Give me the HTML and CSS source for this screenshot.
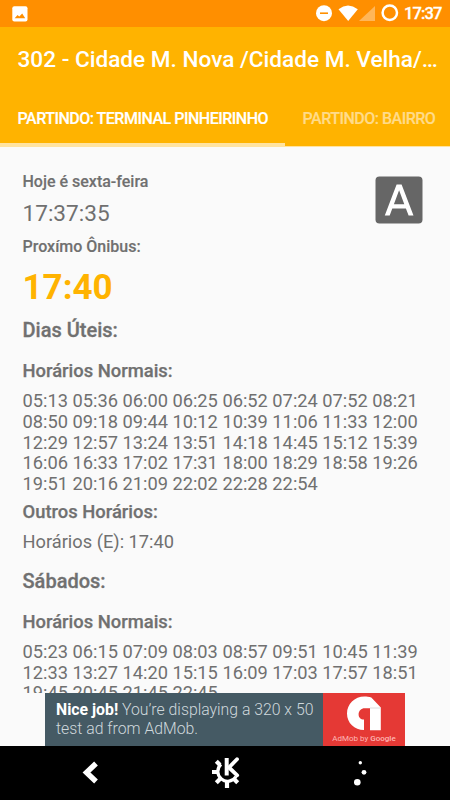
FILE: index.html
```html
<!DOCTYPE html>
<html lang="pt-BR">
<head>
<meta charset="utf-8">
<title>302 - Cidade M. Nova</title>
<link rel="stylesheet" href="styles.css">
</head>
<body>
<div class="phone">
  <header class="status">
    <svg class="picture" width="16" height="16" viewBox="0 0 16 16"><rect x=".3" y=".2" width="15.2" height="15.3" rx="2" fill="#fff"/><path d="M2.7 12.2 5.5 9l1.8 1.6 2.9-3 3 4.6z" fill="#ff8f00"/></svg>
    <svg class="signals" width="84" height="20" viewBox="0 0 84 20"><circle cx="8" cy="10.2" r="8" fill="#fff"/><path d="M4 10.2h8" stroke="#ff8f00" stroke-width="1.6"/><path d="M22.5 6.2Q32 -1 41.8 6.2L32.2 18z" fill="#fff"/><path d="M59 3v15H43z" fill="#fff" opacity=".35"/><circle cx="73.8" cy="9.7" r="7.2" fill="none" stroke="#fff" stroke-width="2.5"/></svg>
    <span class="clock">17:37</span>
  </header>
  <div class="toolbar">
    <h1 class="title">302 - Cidade M. Nova /Cidade M. Velha/…</h1>
    <nav class="tabs">
      <span class="tab active"><span class="tab-text">PARTINDO: TERMINAL PINHEIRINHO</span></span>
      <span class="tab"><span class="tab-text">PARTINDO: BAIRRO</span></span>
    </nav>
  </div>
  <main class="content">
    <div class="summary">
      <div>
        <p class="label">Hoje é sexta-feira</p>
        <p class="now">17:37:35</p>
        <p class="label">Proxímo Ônibus:</p>
        <p class="next">17:40</p>
      </div>
      <svg class="badge" width="48" height="48" viewBox="0 0 48 48"><rect x=".5" y=".5" width="47" height="47" rx="4" fill="#666"/><path fill-rule="evenodd" d="M9.8 39.5 21.6 8.5h5L38.5 39.5h-4.9l-2.7-7H17.3l-2.6 7zM18.9 28.3h10.4L24.1 14.2z" fill="#fff"/></svg>
    </div>
    <h2 class="day">Dias Úteis:</h2>
    <h3 class="kind">Horários Normais:</h3>
    <p class="times">05:13 05:36 06:00 06:25 06:52 07:24 07:52 08:21<br>08:50 09:18 09:44 10:12 10:39 11:06 11:33 12:00<br>12:29 12:57 13:24 13:51 14:18 14:45 15:12 15:39<br>16:06 16:33 17:02 17:31 18:00 18:29 18:58 19:26<br>19:51 20:16 21:09 22:02 22:28 22:54</p>
    <h3 class="kind other">Outros Horários:</h3>
    <p class="times">Horários (E): 17:40</p>
    <h2 class="day saturday">Sábados:</h2>
    <h3 class="kind">Horários Normais:</h3>
    <p class="times">05:23 06:15 07:09 08:03 08:57 09:51 10:45 11:39<br>12:33 13:27 14:20 15:15 16:09 17:03 17:57 18:51<br>19:45 20:45 21:45 22:45</p>
  </main>
  <aside class="ad">
    <div class="ad-copy"><p><b>Nice job!</b> You’re displaying a 320 x 50</p><p>test ad from AdMob.</p></div>
    <div class="ad-brand">
      <svg width="36" height="36" viewBox="0 0 36 36"><path d="M18 34V23.6C14.5 23.6 12.6 21 12.6 18.4 12.6 14.8 15.4 12.3 18.5 12.3H24V34.3H34.8V11.5L25.3 1.5C23 .8 20.5 .6 18.5 .6 8.5 .6 1 8.3 1 17.5 1 27 8.5 34 18 34z" fill="#fff"/><path d="M24 12H34.5" stroke="#d5d5d5" stroke-width=".8"/></svg>
      <span class="ad-caption">AdMob by <b>Google</b></span>
    </div>
  </aside>
  <footer class="navbar">
    <svg width="450" height="54" viewBox="0 0 450 54">
      <path d="M96 17.5 86.5 26.5 96 35.5" fill="none" stroke="#fff" stroke-width="5.4"/>
      <g fill="none" stroke="#fff">
        <path d="M221 18.2A9.8 9.8 0 1 0 236 30.5" stroke-width="3.2"/>
        <path d="M218 26h-6M220 19l-3.7-3.7M220 33l-3.7 3.7M227 36v6M234 33l3.7 3.7" stroke-width="4.2"/>
        <path d="M226.7 12v17.5" stroke-width="4"/>
        <path d="M237 13.2l-8 8.3 8.2 7.8" stroke-width="3.8" stroke-linecap="round" stroke-linejoin="round"/>
      </g>
      <g fill="#fff"><circle cx="360.3" cy="16.8" r="1.7"/><circle cx="364" cy="26.3" r="2.4"/><circle cx="357.3" cy="36.3" r="3.3"/></g>
    </svg>
  </footer>
</div>
</body>
</html>
```
FILE: styles.css
```css
* { box-sizing: border-box; }
body, p, h1, h2, h3 { margin: 0; }
body { font-family: Roboto, "Liberation Sans", sans-serif; color: #707070; }
svg { display: block; flex: none; }
.phone { width: 450px; height: 800px; display: flex; flex-direction: column; overflow: hidden; background: #fafafa; }
.status { height: 27px; flex: none; display: flex; padding: 0 8px 0 12px; background: #ff8f00; color: #fff; }
.picture { margin-top: 6px; }
.signals { margin: 3px 0 0 288px; }
.clock { margin-left: 4px; font-size: 16.5px; font-weight: 500; line-height: 28px; letter-spacing: -.9px; white-space: nowrap; -webkit-text-stroke: .3px; }
.toolbar { height: 120px; flex: none; background: #ffb300; color: #fff; overflow: hidden; border-bottom: 1px solid #ffe3a0; }
.title { height: 65px; padding-left: 17.5px; font-size: 22.6px; font-weight: 500; line-height: 65px; white-space: nowrap; }
.tabs { display: flex; height: 54px; }
.tab { flex: none; width: 285px; padding: 0 17.5px; font-size: 16px; font-weight: 500; line-height: 54px; color: #ffdb8a; white-space: nowrap; -webkit-text-stroke: .2px; }
.active { color: #fff; border-bottom: 3px solid #ffe3a0; }
.tab-text { display: inline-block; letter-spacing: -.5px; }
.content { height: 546px; flex: none; padding: 24px 22px 0 22.5px; overflow: hidden; }
.summary { display: flex; justify-content: space-between; height: 148px; }
.badge { margin: 5px 5px 0 0; }
.label { font-size: 16px; font-weight: 500; line-height: 21px; -webkit-text-stroke: .15px; }
.now { font-size: 22.6px; line-height: 44px; }
.next { margin-top: 7px; color: #ffb300; font-size: 35px; font-weight: 700; line-height: 48px; }
.day { font-size: 20px; font-weight: 500; line-height: 24px; margin-top: -1px; -webkit-text-stroke: .3px; }
.kind { margin-top: 18px; font-size: 18.4px; font-weight: 500; line-height: 22px; -webkit-text-stroke: .25px; }
.times { margin-top: 9px; font-size: 18.25px; line-height: 20.8px; white-space: nowrap; }
.other { margin-top: 6.5px; }
.saturday { margin-top: 15.5px; }
.ad { width: 360px; height: 53px; flex: none; margin-left: 45px; display: flex; }
.ad-copy { width: 278px; padding: 7px 0 0 11px; background: #455a64; color: #cfd8dc; font-size: 15.8px; font-weight: 300; line-height: 19px; white-space: nowrap; }
.ad-copy b { font-weight: 700; color: #fff; }
.ad-brand { width: 82px; background: #e53935; color: #ffb8b5; display: flex; flex-direction: column; align-items: center; padding-top: 3px; }
.ad-caption { font-size: 8px; line-height: 14px; white-space: nowrap; }
.ad-caption b { font-weight: 500; }
.navbar { flex: none; height: 54px; background: #000; }
```
